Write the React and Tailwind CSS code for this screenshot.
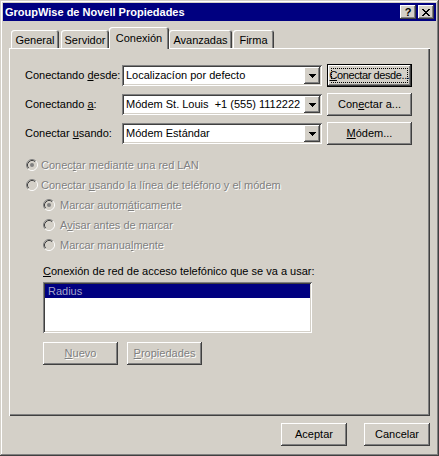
import React from "react";

// Win2000-style bevels
const RAISED =
  "shadow-[inset_-1px_-1px_#404040,inset_1px_1px_#ffffff,inset_-2px_-2px_#808080,inset_2px_2px_#d4d0c8]";
const SUNKEN =
  "shadow-[inset_1px_1px_#808080,inset_-1px_-1px_#ffffff,inset_2px_2px_#404040,inset_-2px_-2px_#d4d0c8]";
const DISABLED = "text-[#808080] [text-shadow:1px_1px_0_#ffffff]";

function Arrow() {
  return (
    <svg width="7" height="4" viewBox="0 0 7 4" shapeRendering="crispEdges">
      <path d="M0 0h7v1h-1v1h-1v1h-1v1h-1v-1h-1v-1h-1v-1h-1z" fill="#000" />
    </svg>
  );
}

function CloseGlyph() {
  const rows = ["11000011", "01100110", "00111100", "00011000", "00111100", "01100110", "11000011"];
  return (
    <svg width="8" height="7" viewBox="0 0 8 7" shapeRendering="crispEdges">
      {rows.map((r, y) =>
        r.split("").map((c, x) =>
          c === "1" ? <rect key={`${x}-${y}`} x={x} y={y} width="1" height="1" fill="#000" /> : null
        )
      )}
    </svg>
  );
}

function Radio({ checked }) {
  return (
    <svg width="12" height="12" viewBox="0 0 12 12" className="shrink-0">
      <circle cx="6" cy="6" r="5" fill="#d4d0c8" />
      <path d="M2.11 9.89 A5.5 5.5 0 0 1 9.89 2.11" fill="none" stroke="#808080" strokeWidth="1" />
      <path d="M2.82 9.18 A4.5 4.5 0 0 1 9.18 2.82" fill="none" stroke="#404040" strokeWidth="1" />
      <path d="M9.89 2.11 A5.5 5.5 0 0 1 2.11 9.89" fill="none" stroke="#ffffff" strokeWidth="1" />
      <path d="M9.18 2.82 A4.5 4.5 0 0 1 2.82 9.18" fill="none" stroke="#d4d0c8" strokeWidth="1" />
      {checked && <circle cx="6" cy="6" r="2" fill="#808080" />}
    </svg>
  );
}

function Button({ children, className = "", disabled, isDefault }) {
  if (isDefault) {
    return (
      <div className={`shrink-0 border border-black ${className}`}>
        <div className={`h-full w-full p-[3px] flex ${RAISED}`}>
          <div className="flex-1 min-w-0 flex items-center justify-center border border-dotted border-black">
            <span className="whitespace-nowrap tracking-[-0.4px]">{children}</span>
          </div>
        </div>
      </div>
    );
  }
  return (
    <div
      className={`shrink-0 flex items-center justify-center ${RAISED} ${disabled ? DISABLED : "text-black"} ${className}`}
    >
      <span className="whitespace-nowrap">{children}</span>
    </div>
  );
}

function Combo({ value }) {
  return (
    <div className={`shrink-0 w-[200px] h-[21px] bg-white flex items-center pl-[4px] pr-[2px] ${SUNKEN}`}>
      <span className="flex-1 whitespace-pre truncate">{value}</span>
      <div className={`w-[16px] h-[17px] bg-[#d4d0c8] flex items-center justify-center ${RAISED}`}>
        <Arrow />
      </div>
    </div>
  );
}

function Row({ label, value, button, isDefault }) {
  return (
    <div className="flex items-center h-[23px]">
      <div className="w-[97px] shrink-0 whitespace-nowrap">{label}</div>
      <Combo value={value} />
      <Button isDefault={isDefault} className="ml-[5px] w-[85px] h-[23px]">
        {button}
      </Button>
    </div>
  );
}

function Tab({ label, width, selected, className = "" }) {
  return (
    <div
      className={`${width} ${
        selected ? "h-[22px] -mb-px relative z-10 pt-[1px]" : "h-[18px] pt-[2px]"
      } bg-[#d4d0c8] rounded-t-[3px] flex items-center justify-center whitespace-nowrap shadow-[inset_1px_1px_#ffffff,inset_-1px_0_#404040,inset_-2px_0_#808080] ${className}`}
    >
      {label}
    </div>
  );
}

export default function App() {
  return (
    <div className="w-[439px] h-[456px] bg-[#d4d0c8] p-[3px] flex flex-col font-['Liberation_Sans',Arial,sans-serif] text-[11px] leading-[13px] text-black shadow-[inset_-1px_-1px_#404040,inset_1px_1px_#d4d0c8,inset_-2px_-2px_#808080,inset_2px_2px_#ffffff]">
      {/* Title bar */}
      <div className="h-[18px] bg-[#000080] flex items-center justify-between pl-[2px] pr-[2px]">
        <span className="text-white font-bold text-[11px]">GroupWise de Novell Propiedades</span>
        <div className="flex gap-[2px]">
          <div className={`w-[16px] h-[14px] bg-[#d4d0c8] flex items-center justify-center font-bold text-[11px] leading-none ${RAISED}`}>
            ?
          </div>
          <div className={`w-[16px] h-[14px] bg-[#d4d0c8] flex items-center justify-center ${RAISED}`}>
            <CloseGlyph />
          </div>
        </div>
      </div>

      {/* Tabs */}
      <div className="mt-[6px] ml-[8px] h-[21px] flex items-end">
        <Tab label="General" width="w-[48px]" />
        <Tab label="Servidor" width="w-[48px]" className="ml-[2px]" />
        <Tab label="Conexión" width="w-[60px]" selected />
        <Tab label="Avanzadas" width="w-[63px]" />
        <Tab label="Firma" width="w-[41px]" className="ml-[1px]" />
      </div>

      {/* Panel */}
      <div className="ml-[6px] w-[421px] h-[368px] pl-[16px] pt-[16px] flex flex-col shadow-[inset_1px_1px_#ffffff,inset_-1px_-1px_#404040,inset_-2px_-2px_#808080]">
        <div className="flex flex-col gap-[6px]">
          <Row
            label={<>Conectando <u>d</u>esde:</>}
            value="Localizacíon por defecto"
            button={<><u>C</u>onectar desde...</>}
            isDefault
          />
          <Row
            label={<>Conectando <u>a</u>:</>}
            value="Módem St. Louis  +1 (555) 1112222"
            button={<>Con<u>e</u>ctar a...</>}
          />
          <Row
            label={<>Conectar <u>u</u>sando:</>}
            value="Módem Estándar"
            button={<><u>M</u>ódem...</>}
          />
        </div>

        {/* Radios */}
        <div className={`mt-[10px] flex flex-col ${DISABLED}`}>
          <div className="h-[20px] flex items-center ml-[1px] gap-[3px]">
            <Radio checked />
            <span>Conec<u>t</u>ar mediante una red LAN</span>
          </div>
          <div className="h-[20px] flex items-center ml-[1px] gap-[3px]">
            <Radio />
            <span>Conectar <u>u</u>sando la línea de teléfono y el módem</span>
          </div>
          <div className="h-[20px] flex items-center ml-[18px] gap-[5px]">
            <Radio checked />
            <span>Marcar autom<u>á</u>ticamente</span>
          </div>
          <div className="h-[20px] flex items-center ml-[18px] gap-[5px]">
            <Radio />
            <span>A<u>v</u>isar antes de marcar</span>
          </div>
          <div className="h-[20px] flex items-center ml-[18px] gap-[5px]">
            <Radio />
            <span>Marcar manua<u>l</u>mente</span>
          </div>
        </div>

        {/* Dial-up list */}
        <div className="mt-[9px] ml-[18px] h-[14px] flex items-center">
          <span><u>C</u>onexión de red de acceso telefónico que se va a usar:</span>
        </div>
        <div className={`mt-[4px] ml-[18px] w-[269px] h-[51px] bg-white p-[2px] ${SUNKEN}`}>
          <div className="h-[14px] bg-[#000080] text-[#a4a4c8] pl-[3px] flex items-center">Radius</div>
        </div>
        <div className="mt-[9px] ml-[18px] flex gap-[9px]">
          <Button disabled className="w-[75px] h-[23px]">
            <u>N</u>uevo
          </Button>
          <Button disabled className="w-[75px] h-[23px]">
            <u>P</u>ropiedades
          </Button>
        </div>
      </div>

      {/* Bottom buttons */}
      <div className="mt-[7px] flex justify-end gap-[17px] pr-[6px]">
        <Button className="w-[66px] h-[23px]">Aceptar</Button>
        <Button className="w-[66px] h-[23px]">Cancelar</Button>
      </div>
    </div>
  );
}
